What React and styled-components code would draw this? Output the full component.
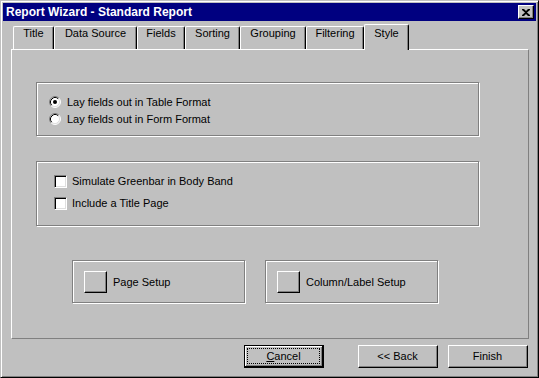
import React from "react";
import styled, { createGlobalStyle } from "styled-components";

const Global = createGlobalStyle`
  html, body { margin: 0; padding: 0; background: #c0c0c0; }
  body { font-family: "Liberation Sans", Arial, sans-serif; font-size: 11px; color: #000; }
  * { box-sizing: border-box; }
`;

const Window = styled.div`
  width: 539px;
  height: 378px;
  background: #c0c0c0;
  border: 1px solid;
  border-color: #c0c0c0 #000 #000 #c0c0c0;
  box-shadow: inset 1px 1px 0 #fff, inset -1px -1px 0 #808080;
  padding: 2px;
  display: flex;
  flex-direction: column;
`;

const TitleBar = styled.div`
  height: 18px;
  background: #000080;
  display: flex;
  align-items: center;
  justify-content: space-between;
  padding: 0 2px 0 3px;
`;

const TitleText = styled.span`
  color: #fff;
  font-weight: bold;
  font-size: 12px;
`;

const CloseButton = styled.div`
  width: 16px;
  height: 14px;
  background: #c0c0c0;
  border: 1px solid;
  border-color: #fff #000 #000 #fff;
  box-shadow: inset -1px -1px 0 #808080;
  display: flex;
  align-items: center;
  justify-content: center;
`;

const Body = styled.div`
  padding: 3px 0 0 8px;
  display: flex;
  flex-direction: column;
`;

const TabRow = styled.div`
  height: 26px;
  margin-bottom: -1px;
  padding-left: 2px;
  display: flex;
  align-items: flex-end;
  position: relative;
  z-index: 1;
`;

const Tab = styled.div`
  width: ${(p) => p.$w}px;
  height: ${(p) => (p.$active ? 26 : 23)}px;
  margin-bottom: ${(p) => (p.$active ? 0 : 1)}px;
  background: #c0c0c0;
  border-top: 1px solid #fff;
  border-left: 1px solid #fff;
  border-right: 1px solid #000;
  box-shadow: inset -1px 0 0 #808080;
  border-top-left-radius: 2px;
  border-top-right-radius: 2px;
  display: flex;
  align-items: flex-start;
  justify-content: center;
  padding-top: ${(p) => (p.$active ? 2 : 0)}px;
  line-height: 13px;
`;

const Panel = styled.div`
  width: 518px;
  height: 290px;
  border: 1px solid;
  border-color: #fff #808080 #808080 #fff;
  padding: 32px 0 0 24px;
  display: flex;
  flex-direction: column;
`;

const Group = styled.div`
  width: 443px;
  height: ${(p) => p.$h}px;
  border: 1px solid #808080;
  box-shadow: inset 1px 1px 0 #fff, 1px 1px 0 #fff;
  margin-bottom: ${(p) => p.$mb || 0}px;
  padding: ${(p) => p.$pad};
  display: flex;
  flex-direction: column;
  gap: ${(p) => p.$gap}px;
`;

const OptionRow = styled.label`
  display: flex;
  align-items: center;
  gap: ${(p) => p.$gap}px;
  height: ${(p) => p.$h}px;
  line-height: 1;
`;

const CheckBox = styled.span`
  width: 13px;
  height: 13px;
  background: #fff;
  border: 1px solid;
  border-color: #808080 #fff #fff #808080;
  box-shadow: inset 1px 1px 0 #000, inset -1px -1px 0 #dfdfdf;
  flex: none;
`;

const ButtonGroups = styled.div`
  display: flex;
  gap: 20px;
  padding-left: 36px;
`;

const SetupBox = styled.div`
  width: 173px;
  height: 43px;
  border: 1px solid #808080;
  box-shadow: inset 1px 1px 0 #fff, 1px 1px 0 #fff;
  display: flex;
  align-items: center;
  padding: 1px 0 0 11px;
  gap: 6px;
`;

const SquareButton = styled.div`
  width: 23px;
  height: 22px;
  background: #c0c0c0;
  border: 1px solid;
  border-color: #fff #000 #000 #fff;
  box-shadow: inset -1px -1px 0 #808080;
  flex: none;
`;

const Footer = styled.div`
  display: flex;
  justify-content: flex-end;
  padding-right: 8px;
  margin-top: 6px;
`;

const Button = styled.div`
  width: 80px;
  height: 23px;
  margin-left: ${(p) => p.$ml}px;
  background: #c0c0c0;
  border: 1px solid;
  border-color: ${(p) => (p.$default ? "#000" : "#fff #000 #000 #fff")};
  box-shadow: ${(p) =>
    p.$default
      ? "inset -1px -1px 0 #000, inset 1px 1px 0 #fff, inset -2px -2px 0 #808080"
      : "inset -1px -1px 0 #808080"};
  display: flex;
  padding: 2px 3px 3px 2px;
`;

const ButtonLabel = styled.span`
  flex: 1;
  display: flex;
  align-items: center;
  justify-content: center;
  border: 1px ${(p) => (p.$focus ? "dotted #000" : "solid transparent")};
`;

function Radio({ checked }) {
  const a = 3.89;
  const b = 3.18;
  return (
    <svg width="12" height="12" viewBox="0 0 12 12" style={{ flex: "none" }}>
      <circle cx="6" cy="6" r="5" fill="#fff" />
      <path d={`M ${6 - a} ${6 + a} A 5.5 5.5 0 0 1 ${6 + a} ${6 - a}`} stroke="#808080" fill="none" />
      <path d={`M ${6 + a} ${6 - a} A 5.5 5.5 0 0 1 ${6 - a} ${6 + a}`} stroke="#fff" fill="none" />
      <path d={`M ${6 - b} ${6 + b} A 4.5 4.5 0 0 1 ${6 + b} ${6 - b}`} stroke="#000" fill="none" />
      <path d={`M ${6 + b} ${6 - b} A 4.5 4.5 0 0 1 ${6 - b} ${6 + b}`} stroke="#dfdfdf" fill="none" />
      {checked && <circle cx="6" cy="6" r="2" fill="#000" />}
    </svg>
  );
}

const tabs = [
  ["Title", 41],
  ["Data Source", 83],
  ["Fields", 48],
  ["Sorting", 55],
  ["Grouping", 66],
  ["Filtering", 58],
  ["Style", 45],
];

export default function App() {
  return (
    <>
      <Global />
      <Window>
        <TitleBar>
          <TitleText>Report Wizard - Standard Report</TitleText>
          <CloseButton>
            <svg width="8" height="7" viewBox="0 0 8 7">
              <path d="M0 0h2l2 2 2-2h2v1L5 3.5 8 6v1H6L4 5 2 7H0V6l3-2.5L0 1z" fill="#000" />
            </svg>
          </CloseButton>
        </TitleBar>
        <Body>
          <TabRow>
            {tabs.map(([t, w]) => (
              <Tab key={t} $w={w} $active={t === "Style"}>
                {t}
              </Tab>
            ))}
          </TabRow>
          <Panel>
            <Group $h={54} $mb={25} $pad="13px 0 0 12px" $gap={5}>
              <OptionRow $gap={6} $h={12}>
                <Radio checked />
                Lay fields out in Table Format
              </OptionRow>
              <OptionRow $gap={6} $h={12}>
                <Radio />
                Lay fields out in Form Format
              </OptionRow>
            </Group>
            <Group $h={65} $mb={34} $pad="13px 0 0 17px" $gap={9}>
              <OptionRow $gap={5} $h={13}>
                <CheckBox />
                Simulate Greenbar in Body Band
              </OptionRow>
              <OptionRow $gap={5} $h={13}>
                <CheckBox />
                Include a Title Page
              </OptionRow>
            </Group>
            <ButtonGroups>
              <SetupBox>
                <SquareButton />
                Page Setup
              </SetupBox>
              <SetupBox>
                <SquareButton />
                Column/Label Setup
              </SetupBox>
            </ButtonGroups>
          </Panel>
          <Footer>
            <Button $default $ml={0}>
              <ButtonLabel $focus>
                <u>C</u>ancel
              </ButtonLabel>
            </Button>
            <Button $ml={34}>
              <ButtonLabel>&lt;&lt; Back</ButtonLabel>
            </Button>
            <Button $ml={10}>
              <ButtonLabel>Finish</ButtonLabel>
            </Button>
          </Footer>
        </Body>
      </Window>
    </>
  );
}
